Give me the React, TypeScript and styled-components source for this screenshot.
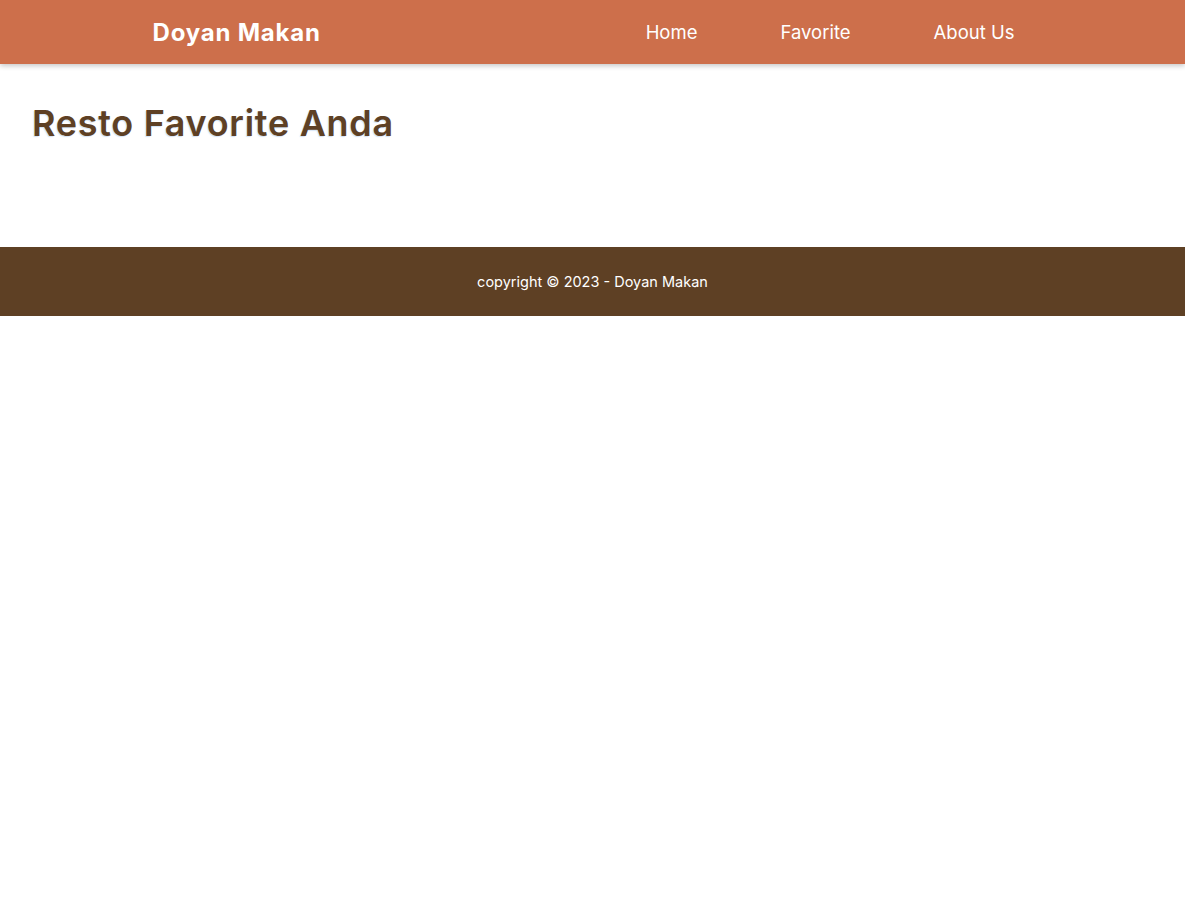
import React from "react";
import styled, { createGlobalStyle } from "styled-components";

const GlobalStyle = createGlobalStyle`
  html {
    overflow-y: scroll;
  }
  html, body {
    margin: 0;
    padding: 0;
    background: #ffffff;
    font-family: Inter, "Noto Sans", "Liberation Sans", sans-serif;
  }
  body {
    margin-right: 15px;
  }
  #root {
    min-height: calc(100vh + 36px);
  }
`;

const Header = styled.header`
  background: #cd6f4b;
  height: 64px;
  box-shadow: 0 2px 5px rgba(0, 0, 0, 0.22);
  position: relative;
  z-index: 1;
`;

const HeaderInner = styled.div`
  max-width: 880px;
  height: 100%;
  margin: 0 auto;
  display: flex;
  align-items: center;
  justify-content: space-between;
`;

const Logo = styled.a`
  color: #ffffff;
  font-size: 24px;
  font-weight: 700;
  letter-spacing: 0.8px;
  text-decoration: none;
`;

const Nav = styled.nav`
  display: flex;
  align-items: center;
  gap: 83px;
  padding-right: 18px;
`;

const NavLink = styled.a`
  color: #ffffff;
  font-size: 18.5px;
  font-weight: 400;
  text-decoration: none;
`;

const Main = styled.main`
  height: 183px;
  padding: 37px 32px 0;
  box-sizing: border-box;
`;

const Title = styled.h1`
  margin: 0;
  color: #5e4024;
  font-size: 36px;
  font-weight: 600;
  letter-spacing: 0.7px;
  text-shadow: -1px 1px 1px rgba(120, 170, 230, 0.35);
`;

const Footer = styled.footer`
  background: #5e4024;
  height: 69px;
  display: flex;
  align-items: center;
  justify-content: center;
`;

const FooterText = styled.p`
  margin: 0;
  color: #ffffff;
  font-size: 14.5px;
`;

export default function App() {
  return (
    <>
      <GlobalStyle />
      <Header>
        <HeaderInner>
          <Logo href="#">Doyan Makan</Logo>
          <Nav>
            <NavLink href="#">Home</NavLink>
            <NavLink href="#">Favorite</NavLink>
            <NavLink href="#">About Us</NavLink>
          </Nav>
        </HeaderInner>
      </Header>
      <Main>
        <Title>Resto Favorite Anda</Title>
      </Main>
      <Footer>
        <FooterText>copyright © 2023 - Doyan Makan</FooterText>
      </Footer>
    </>
  );
}
